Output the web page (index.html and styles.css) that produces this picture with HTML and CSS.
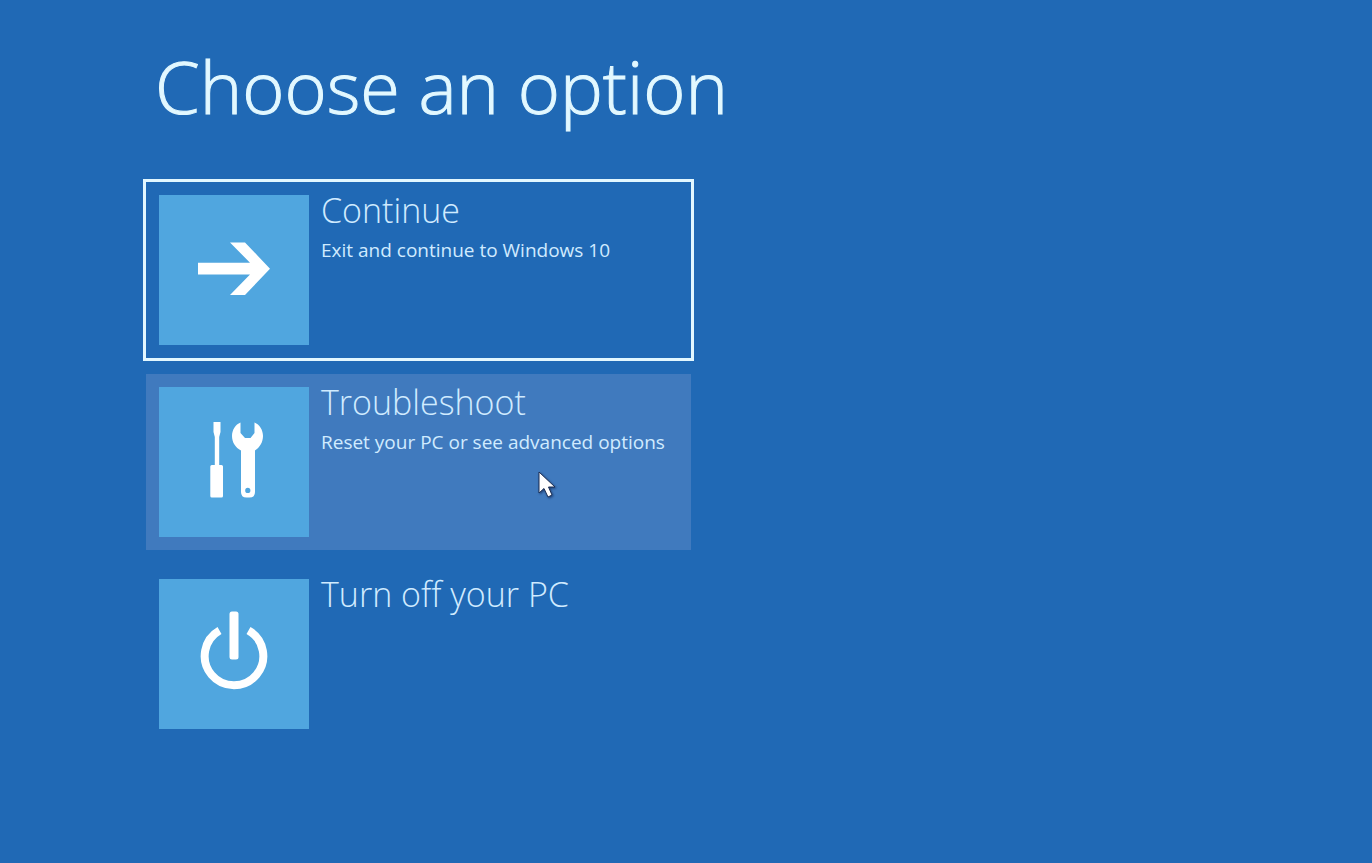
FILE: index.html
```
<!DOCTYPE html>
<html lang="en">
<head>
<meta charset="utf-8">
<title>Choose an option</title>
<link rel="stylesheet" href="styles.css">
</head>
<body>
<main class="screen">
  <h1 class="title">Choose an option</h1>
  <div class="options">
    <button class="option option-focused" type="button">
      <svg class="tile" viewBox="0 0 150 150" aria-hidden="true">
        <path d="M39 67.8H91L71 47.4H86L111 73.7L86 100H71L91 79.4H39Z"/>
      </svg>
      <span class="text">
        <span class="name">Continue</span>
        <span class="detail">Exit and continue to Windows 10</span>
      </span>
    </button>
    <button class="option option-hover" type="button">
      <svg class="tile" viewBox="0 0 150 150" aria-hidden="true">
        <path d="M54.5 35H61.5V45L60.2 50V78H62.5Q64 78 64 79.5V109Q64 110.5 62.5 110.5H52.8Q51.3 110.5 51.3 109V79.5Q51.3 78 52.8 78H55.8V50L54.5 45Z"/>
        <path fill-rule="evenodd" d="M81.500 35.500V46L86 51H91.500L95.500 46V35.500C100.500 37.500 104 43 104 49C104 55.500 100.500 60.500 96 63.500V105Q96 110.500 90.500 110.500H87.500Q82 110.500 82 105V63.500C76.500 60.500 73 55.500 73 49C73 43 76.500 37.500 81.500 35.500ZM88.800 100.800A2.600 2.600 0 1 0 88.800 106A2.600 2.600 0 1 0 88.800 100.800Z"/>
      </svg>
      <span class="text">
        <span class="name">Troubleshoot</span>
        <span class="detail">Reset your PC or see advanced options</span>
      </span>
      <svg class="pointer" viewBox="0 0 18 28" aria-hidden="true">
        <path d="M1 1V22L6 17.500L10 26L14 24L10.500 16H17Z"/>
      </svg>
    </button>
    <button class="option" type="button">
      <svg class="tile" viewBox="0 0 150 150" aria-hidden="true">
        <path class="ring" d="M60.500 51.500A29.300 29.300 0 1 0 89.500 51.500"/>
        <rect x="70.500" y="32.500" width="9" height="48" rx="2.500"/>
      </svg>
      <span class="text">
        <span class="name">Turn off your PC</span>
      </span>
    </button>
  </div>
</main>
</body>
</html>
```
FILE: styles.css
```
* {
  box-sizing: border-box;
}

body {
  margin: 0;
  min-height: 100vh;
  background: #2069b5;
  color: #d0ebff;
  font-family: "Open Sans", "Noto Sans", sans-serif;
}

.screen {
  padding: 32px 24px 32px 143px;
}

.title {
  margin: 0 0 39px;
  padding-left: 12px;
  color: #e2f8ff;
  font-size: 72px;
  font-weight: 300;
  line-height: 108px;
  -webkit-text-stroke: 1px #e2f8ff;
}

.options {
  display: flex;
  flex-direction: column;
  gap: 10px;
  max-width: 551px;
}

.option {
  position: relative;
  display: flex;
  align-items: flex-start;
  gap: 12px;
  padding: 13px;
  border: 3px solid transparent;
  background: transparent;
  background-clip: padding-box;
  color: inherit;
  font-family: inherit;
  text-align: left;
}

.option-focused {
  border-color: #e2f7ff;
}

.option-hover {
  background-color: #407abe;
}

.tile {
  flex: none;
  width: 150px;
  height: 150px;
  background: #50a6df;
  fill: #fff;
}

.ring {
  fill: none;
  stroke: #fff;
  stroke-width: 8;
}

.text {
  display: flex;
  flex-direction: column;
}

.name {
  font-size: 34px;
  font-weight: 350;
  line-height: 30px;
}

.detail {
  margin-top: 11px;
  font-size: 19px;
  line-height: 28px;
}

.pointer {
  position: absolute;
  left: 392px;
  top: 97px;
  width: 18px;
  height: 28px;
  fill: #fff;
  stroke: #1c2f55;
  stroke-width: 1;
  filter: drop-shadow(1px 1px 1px #1c3f75);
}
```
